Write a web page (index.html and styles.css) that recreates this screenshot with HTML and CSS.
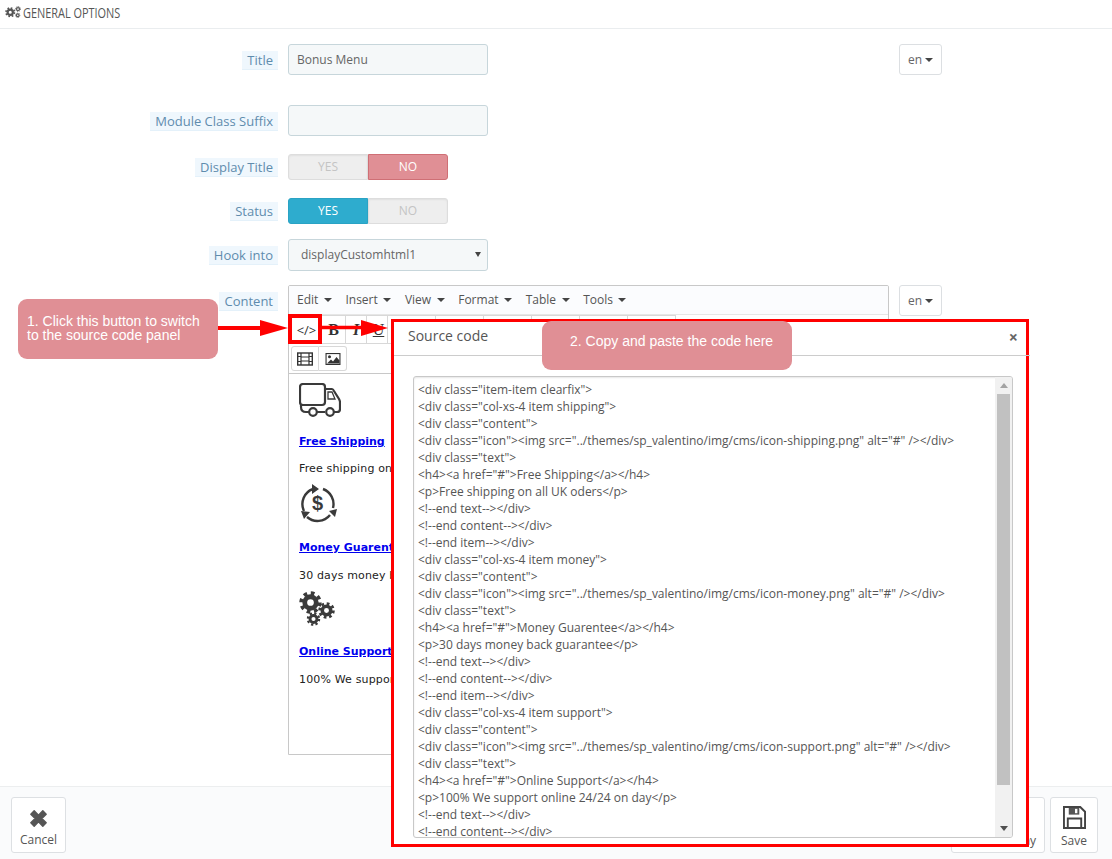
FILE: index.html
```html
<!DOCTYPE html>
<html lang="en">
<head>
<meta charset="utf-8">
<title>General options</title>
<link rel="stylesheet" href="styles.css">
</head>
<body>
<svg class="defs" width="0" height="0" aria-hidden="true">
  <symbol id="gear" viewBox="0 0 24 24">
    <circle cx="12" cy="12" r="6" fill="none" stroke="currentColor" stroke-width="5"/>
    <circle cx="12" cy="12" r="9.800" fill="none" stroke="currentColor" stroke-width="3.800" stroke-dasharray="3.850 3.850"/>
  </symbol>
</svg>
<div class="page">
  <header class="head">
    <svg class="head-icon" viewBox="0 0 16 12"><use href="#gear" x="0" y="1" width="10.500" height="10.500"/><use href="#gear" x="10" y="0" width="6" height="6"/><use href="#gear" x="10" y="6.500" width="5.500" height="5.500"/></svg>
    <span class="head-text">GENERAL OPTIONS</span>
  </header>
  <main class="form">
    <div class="row row-title">
      <div class="label-col"><span class="label">Title</span></div>
      <div class="control"><div class="input">Bonus Menu</div></div>
      <button class="lang">en<i class="caret"></i></button>
    </div>
    <div class="row row-suffix">
      <div class="label-col"><span class="label">Module Class Suffix</span></div>
      <div class="control"><div class="input"></div></div>
    </div>
    <div class="row row-display">
      <div class="label-col"><span class="label">Display Title</span></div>
      <div class="switch"><span class="opt">YES</span><span class="opt opt-no">NO</span></div>
    </div>
    <div class="row row-status">
      <div class="label-col"><span class="label">Status</span></div>
      <div class="switch"><span class="opt opt-yes">YES</span><span class="opt">NO</span></div>
    </div>
    <div class="row row-hook">
      <div class="label-col"><span class="label">Hook into</span></div>
      <div class="control"><div class="input select">displayCustomhtml1<i class="caret caret-select"></i></div></div>
    </div>
    <div class="row row-content">
      <div class="label-col label-top"><span class="label">Content</span></div>
      <div class="editor">
        <nav class="menubar">
          <span class="menu">Edit<i class="caret"></i></span>
          <span class="menu">Insert<i class="caret"></i></span>
          <span class="menu">View<i class="caret"></i></span>
          <span class="menu">Format<i class="caret"></i></span>
          <span class="menu">Table<i class="caret"></i></span>
          <span class="menu">Tools<i class="caret"></i></span>
        </nav>
        <div class="toolbar">
          <div class="tool-row">
            <span class="tool tool-code">&lt;/&gt;</span>
            <span class="tool tool-b">B</span>
            <span class="tool tool-i">I</span>
            <span class="tool tool-u">U</span>
            <span class="tool tool-wide"></span>
            <span class="tool tool-wide"></span>
            <span class="tool tool-wide"></span>
            <span class="tool tool-wide"></span>
            <span class="tool tool-wide"></span>
            <span class="tool tool-wide"></span>
          </div>
          <div class="tool-row tool-row2">
            <span class="tool tool-media">
              <svg viewBox="0 0 16 14" width="16" height="14"><rect x="0.7" y="1" width="14.600" height="12" fill="none" stroke="#333" stroke-width="1.400"/><path d="M4 1v12M12 1v12M4 5h8M4 9h8M1 4.500h3M1 9.500h3M12 4.500h3M12 9.500h3" stroke="#333" stroke-width="1.200" fill="none"/></svg>
            </span>
            <span class="tool tool-media">
              <svg viewBox="0 0 16 14" width="16" height="14"><rect x="0.500" y="1" width="15" height="12" fill="#333"/><rect x="1.600" y="2.100" width="12.800" height="9.800" fill="#fff"/><circle cx="4.500" cy="4.800" r="1.500" fill="#333"/><path d="M2 11.500l4-4 2 2 3.500-4.500 3 3.500v3z" fill="#333"/></svg>
            </span>
          </div>
        </div>
        <div class="editor-body">
          <section class="item">
            <svg class="icon-truck" viewBox="0 0 42 34"><rect x="1" y="1" width="25" height="21" rx="3" fill="none" stroke="#3a3a3a" stroke-width="2.200"/><path d="M26 6h7q1 0 2 2l5 8q1 2 1 3v7q0 3-3 3h-3M26 29H18M10 29H7q-5 0-5-5v-2" fill="none" stroke="#3a3a3a" stroke-width="2.200"/><path d="M29 9h4l3 7h-7z" fill="none" stroke="#3a3a3a" stroke-width="1.300"/><circle cx="14" cy="29" r="3.800" fill="#fff" stroke="#3a3a3a" stroke-width="2.200"/><circle cx="31" cy="29" r="3.800" fill="#fff" stroke="#3a3a3a" stroke-width="2.200"/></svg>
            <h4><a href="#">Free Shipping</a></h4>
            <p>Free shipping on all UK oders</p>
          </section>
          <section class="item item-money">
            <svg class="icon-money" viewBox="0 0 38 39"><path d="M5 27A16 16 0 0 1 14 5M24 5A16 16 0 0 1 34 24M31 31A16 16 0 0 1 8 33" fill="none" stroke="#3a3a3a" stroke-width="2.400"/><path d="M13 0l7 5-7 5zM30 27l8-2-2 8zM2 27l9 1-6 7z" fill="#3a3a3a"/><text x="18.500" y="26" class="dollar" text-anchor="middle">$</text></svg>
            <h4><a href="#">Money Guarentee</a></h4>
            <p>30 days money back guarantee</p>
          </section>
          <section class="item item-support">
            <svg class="icon-gears" viewBox="0 0 36 36"><use href="#gear" x="0" y="0" width="23" height="23"/><use href="#gear" x="19" y="11" width="17" height="17"/><use href="#gear" x="7.500" y="21" width="14" height="14"/></svg>
            <h4><a href="#">Online Support</a></h4>
            <p>100% We support online 24/24 on day</p>
          </section>
        </div>
      </div>
      <button class="lang lang-content">en<i class="caret"></i></button>
    </div>
  </main>
  <footer class="foot">
    <button class="foot-btn foot-cancel">
      <svg class="foot-icon" viewBox="0 0 24 24"><path d="M4 7.500l3.500-3.500 4.500 4.500 4.500-4.500 3.500 3.500-4.500 4.500 4.500 4.500-3.500 3.500-4.500-4.500-4.500 4.500-3.500-3.500 4.500-4.500z" fill="#555" stroke="#555" stroke-width="1.500" stroke-linejoin="round"/></svg>
      <span>Cancel</span>
    </button>
    <div class="foot-right">
      <button class="foot-btn foot-stay"><span>Save and stay</span></button>
      <button class="foot-btn foot-save">
        <svg class="foot-icon" viewBox="0 0 24 24"><path d="M2 1h16l5 5v17H1V1z" fill="none" stroke="#444" stroke-width="2"/><path d="M6 2h11v7H6z" fill="#555"/><rect x="12.500" y="3" width="2.500" height="4.500" fill="#fff"/><path d="M5 22v-9h14v9" fill="none" stroke="#444" stroke-width="2"/></svg>
        <span>Save</span>
      </button>
    </div>
  </footer>
</div>

<div class="callout callout-one">1. Click this button to switch<br>to the source code panel</div>

<div class="code-mark"></div>
<svg class="arrow arrow-one" viewBox="0 0 70 16"><path d="M0 8h44" stroke="#f00" stroke-width="4"/><path d="M42 0l28 8-28 8z" fill="#f00"/></svg>
<svg class="arrow arrow-two" viewBox="0 0 66 16"><path d="M0 7.500h42" stroke="#f00" stroke-width="3.500"/><path d="M39 0l27 8-27 8z" fill="#f00"/></svg>

<section class="modal">
  <div class="modal-head"><span>Source code</span><b class="modal-close">×</b></div>
  <div class="modal-body">
    <div class="code-box">
      <div class="code">&lt;div class="item-item clearfix"&gt;
&lt;div class="col-xs-4 item shipping"&gt;
&lt;div class="content"&gt;
&lt;div class="icon"&gt;&lt;img src="../themes/sp_valentino/img/cms/icon-shipping.png" alt="#" /&gt;&lt;/div&gt;
&lt;div class="text"&gt;
&lt;h4&gt;&lt;a href="#"&gt;Free Shipping&lt;/a&gt;&lt;/h4&gt;
&lt;p&gt;Free shipping on all UK oders&lt;/p&gt;
&lt;!--end text--&gt;&lt;/div&gt;
&lt;!--end content--&gt;&lt;/div&gt;
&lt;!--end item--&gt;&lt;/div&gt;
&lt;div class="col-xs-4 item money"&gt;
&lt;div class="content"&gt;
&lt;div class="icon"&gt;&lt;img src="../themes/sp_valentino/img/cms/icon-money.png" alt="#" /&gt;&lt;/div&gt;
&lt;div class="text"&gt;
&lt;h4&gt;&lt;a href="#"&gt;Money Guarentee&lt;/a&gt;&lt;/h4&gt;
&lt;p&gt;30 days money back guarantee&lt;/p&gt;
&lt;!--end text--&gt;&lt;/div&gt;
&lt;!--end content--&gt;&lt;/div&gt;
&lt;!--end item--&gt;&lt;/div&gt;
&lt;div class="col-xs-4 item support"&gt;
&lt;div class="content"&gt;
&lt;div class="icon"&gt;&lt;img src="../themes/sp_valentino/img/cms/icon-support.png" alt="#" /&gt;&lt;/div&gt;
&lt;div class="text"&gt;
&lt;h4&gt;&lt;a href="#"&gt;Online Support&lt;/a&gt;&lt;/h4&gt;
&lt;p&gt;100% We support online 24/24 on day&lt;/p&gt;
&lt;!--end text--&gt;&lt;/div&gt;
&lt;!--end content--&gt;&lt;/div&gt;</div>
      <div class="scrollbar">
        <i class="sb-up"></i>
        <div class="sb-track"><div class="sb-thumb"></div></div>
        <i class="sb-down"></i>
      </div>
    </div>
  </div>
</section>

<div class="callout callout-two">2. Copy and paste the code here</div>
</body>
</html>
```
FILE: styles.css
```css
* { box-sizing: border-box; }
html, body { margin: 0; height: 100%; background: #fff; overflow: hidden; }
body { font-family: "Open Sans", sans-serif; font-size: 12px; color: #666; position: relative; }
.defs { position: absolute; }

.page { height: 859px; display: flex; flex-direction: column; }

.head { height: 29px; border-bottom: 1px solid #eaedef; padding: 5px 0 0 5px; display: flex; align-items: flex-start; gap: 2px; color: #555; font-size: 14px; line-height: 15px; }
.head-icon { width: 16px; height: 12px; margin-top: 1px; color: #555; }
.head-text { display: inline-block; transform: scaleX(.78); transform-origin: left center; white-space: nowrap; }

.form { flex: 1; padding-top: 15px; }
.row { display: flex; align-items: center; }
.row-title { height: 31px; }
.row-suffix { height: 31px; margin-top: 30px; }
.row-display { height: 26px; margin-top: 18px; }
.row-status { height: 26px; margin-top: 18px; }
.row-hook { height: 32px; margin-top: 15px; }
.row-content { margin-top: 14px; align-items: flex-start; }

.label-col { width: 278px; margin-right: 10px; flex: none; text-align: right; }
.label-top { padding-top: 7px; }
.label { display: inline-block; height: 19px; line-height: 19px; padding: 0 5px; background: #eff7fd; border-bottom: 1px solid #e4f1fa; color: #5f8cad; font-size: 13px; }
.row-title .label, .row-suffix .label { margin-top: 2px; }

.control { width: 200px; }
.input { height: 31px; background: #f5f8f9; border: 1px solid #c7d6db; border-radius: 3px; padding: 0 8px; line-height: 29px; font-size: 12px; color: #666; }
.select { height: 32px; line-height: 30px; padding-left: 12px; position: relative; }
.caret { display: inline-block; width: 0; height: 0; border-left: 4px solid transparent; border-right: 4px solid transparent; border-top: 4px solid #444; margin-left: 3px; vertical-align: 2px; }
.caret-select { position: absolute; right: 6px; top: 12px; border-left-width: 3.500px; border-right-width: 3.500px; border-top-width: 5px; }

.lang { margin-left: 411px; width: 43px; height: 31px; background: #fff; border: 1px solid #dcdfe2; border-radius: 3px; font: 12px "Open Sans", sans-serif; color: #666; padding: 0; }
.lang-content { margin-left: 10px; }

.switch { display: flex; width: 160px; height: 26px; }
.opt { flex: 1; background: #eee; border: 1px solid #ddd; text-align: center; line-height: 24px; color: #c4c4c4; font-size: 12px; box-shadow: inset 0 1px 2px rgba(0,0,0,.06); }
.opt:first-child { border-radius: 3px 0 0 3px; }
.opt:last-child { border-radius: 0 3px 3px 0; }
.opt-no { background: #e08f95; border-color: #cf6f75; color: #fff; font-weight: 500; box-shadow: none; }
.opt-yes { background: #2eacce; border-color: #2aa3c4; color: #fff; font-weight: 500; box-shadow: none; }

.editor { width: 601px; height: 470px; border: 1px solid #c8c8c8; border-radius: 2px 2px 0 0; overflow: hidden; }
.menubar { height: 29px; background: #fbfcfe; border-bottom: 1px solid #e6e6e6; padding: 0 0 2px 8px; display: flex; align-items: center; gap: 13.600px; font-size: 12px; color: #555; }
.menu .caret { margin-left: 5.500px; }
.toolbar { height: 59px; border-bottom: 1px solid #c8c8c8; padding: 0 0 0 2px; }
.tool-row { display: flex; height: 30px; }
.tool { display: flex; align-items: center; justify-content: center; width: 32px; height: 29px; border: 1px solid #d8d8d8; border-left-width: 0; background: #fff; color: #333; font-family: "Liberation Serif", serif; font-size: 16px; font-weight: 700; }
.tool-code { font-family: "Open Sans", sans-serif; font-size: 13px; font-weight: 400; border-left-width: 1px; width: 31px; }
.tool-b { width: 24px; }
.tool-i { width: 21px; font-style: italic; }
.tool-u { width: 21px; padding-left: 3px; text-decoration: underline; font-weight: 400; }
.tool-wide { width: 48px; }
.tool-row2 { height: 27px; padding-top: 1px; }
.tool-media { height: 25px; width: 28px; border-radius: 0 3px 3px 0; }
.tool-media:first-child { border-left-width: 1px; border-radius: 3px 0 0 3px; }

.editor-body { padding: 9px 10px; font-family: "DejaVu Sans", sans-serif; font-size: 11px; color: #222; white-space: nowrap; }
.item h4 { margin: 18px 0 0; font-size: 11px; line-height: 13px; font-weight: 700; }
.item h4 a { color: #00e; }
.item p { margin: 14px 0 0; line-height: 14px; letter-spacing: .15px; }
.icon-truck { display: block; width: 42px; height: 34px; }
.item-money { margin-top: 8px; }
.item-money p, .item-support p { margin-top: 15px; }
.icon-money { display: block; width: 38px; height: 39px; }
.dollar { font: 700 20px "Liberation Sans", sans-serif; fill: #3a3a3a; }
.item-support { margin-top: 8px; }
.icon-gears { display: block; width: 36px; height: 36px; color: #3a3a3a; }

.foot { height: 73px; flex: none; background: #fafbfc; border-top: 1px solid #eceeef; padding: 10px 14px 0 11px; display: flex; justify-content: space-between; align-items: flex-start; }
.foot-right { display: flex; gap: 5px; }
.foot-btn { width: 55px; height: 56px; background: #fff; border: 1px solid #dde0e3; border-radius: 3px; padding: 8px 0 0; display: flex; flex-direction: column; align-items: center; font: 12px "Open Sans", sans-serif; color: #555; }
.foot-icon { width: 23px; height: 23px; margin-bottom: 3px; }
.foot-cancel { padding-top: 9px; }
.foot-cancel .foot-icon { margin-bottom: 1px; }
.foot-stay { width: 94px; padding-top: 34px; }
.foot-save { width: 48px; }

.callout { position: absolute; background: #e08f95; color: #fff; font-family: "Liberation Sans", sans-serif; font-size: 14px; line-height: 14px; border-radius: 9px; }
.callout-one { left: 18px; top: 299px; width: 200px; height: 60px; padding: 15px 0 0 9px; }
.callout-two { left: 542px; top: 321px; width: 250px; height: 49px; padding: 13px 0 0 28px; }

.code-mark { position: absolute; left: 288px; top: 314px; width: 34px; height: 30px; border: 4px solid #f00; }
.arrow { position: absolute; }
.arrow-one { left: 218px; top: 320px; width: 70px; height: 16px; }
.arrow-two { left: 322px; top: 320px; width: 66px; height: 16px; }

.modal { position: absolute; left: 391px; top: 319px; width: 638px; height: 528px; background: #fff; border: 3px solid #f00; }
.modal-head { height: 34px; border-bottom: 1px solid #ccc; padding: 4px 0 0 14px; font-size: 14px; line-height: 20px; color: #555; position: relative; margin-right: -4px; }
.modal-close { position: absolute; right: 12px; top: 5px; font-size: 16px; color: #666; }
.modal-body { padding: 20px 13px 0 19px; }
.code-box { height: 462px; border: 1px solid #c8c8c8; border-radius: 3px; display: flex; overflow: hidden; box-shadow: inset 0 1px 2px rgba(0,0,0,.1); }
.code { flex: 1; padding: 4px 4px; white-space: pre; font-size: 12px; line-height: 17px; color: #555; overflow: hidden; }
.scrollbar { width: 17px; flex: none; background: #f1f1f1; display: flex; flex-direction: column; align-items: center; }
.sb-up, .sb-down { width: 0; height: 0; border-left: 4px solid transparent; border-right: 4px solid transparent; }
.sb-up { border-bottom: 5px solid #a3a3a3; margin: 6px 0 6px; }
.sb-down { border-top: 5px solid #505050; margin: 7px 0 6px; }
.sb-track { flex: 1; width: 100%; padding: 0 2px; }
.sb-thumb { height: 391px; background: #c1c1c1; }
```
